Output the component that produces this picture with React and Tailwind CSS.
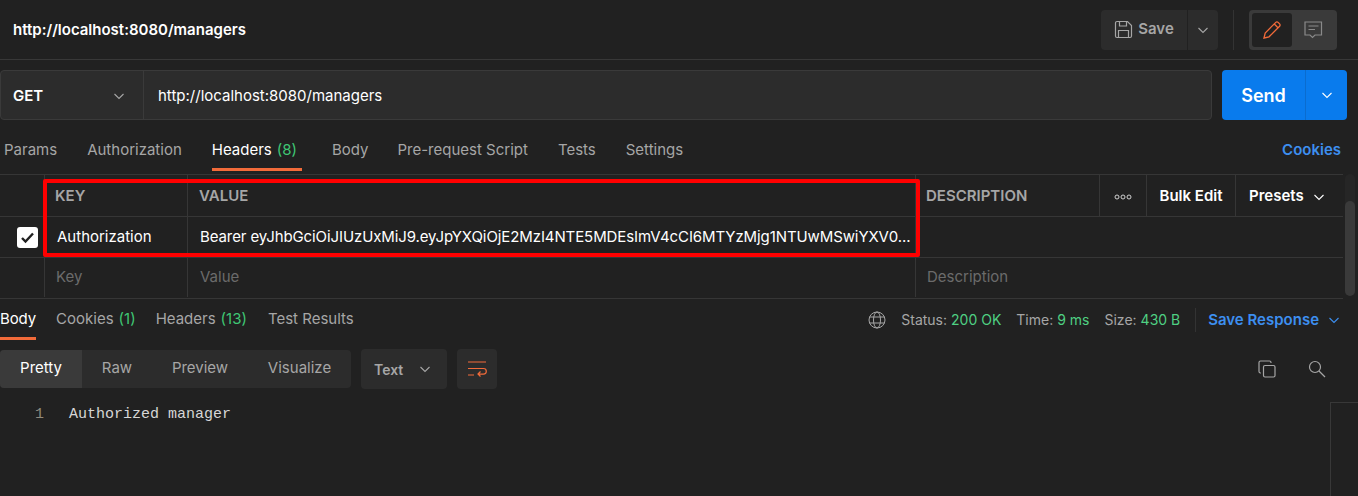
import React from "react";

const Chevron = ({ className = "", size = 14 }) => (
  <svg width={size} height={size} viewBox="0 0 14 14" fill="none" stroke="currentColor" strokeWidth="1.1" className={className}>
    <path d="M2.5 5l4.5 4.5L11.5 5" />
  </svg>
);

const Tab = ({ children, active, count, className = "" }) => (
  <div className={`relative flex h-full items-center whitespace-nowrap ${active ? "text-white" : "text-[#a6a6a6]"} ${className}`}>
    <span>{children}</span>
    {count && <span className="ml-[5px] text-[#3fc774]">{count}</span>}
    {active && <span className="absolute bottom-0 left-0 right-0 h-[3px] bg-[#f26b3a]" />}
  </div>
);

const Th = ({ children, className = "" }) => (
  <div className={`flex h-full items-center border-r border-[#363636] pt-[2px] font-semibold text-[#a6a6a6] ${className}`}>{children}</div>
);

export default function App() {
  return (
    <div className="relative h-[496px] w-[1358px] overflow-hidden bg-[#212121] text-[15px] text-white" style={{ fontFamily: "Inter, sans-serif" }}>
      {/* Title bar */}
      <header className="flex h-[60px] items-center border-b border-[#383838] pr-[21px] pl-[13px]">
        <h1 className="flex-1 pt-[2px] text-[15px] font-semibold">http://localhost:8080/managers</h1>
        <div className="flex h-[40px] items-center gap-px">
          <button className="flex h-full w-[86px] items-center justify-center gap-[5px] rounded-l-[4px] bg-[#2c2c2c] font-semibold text-[#a6a6a6]">
            <svg width="19" height="19" viewBox="0 0 19 19" fill="none" stroke="currentColor" strokeWidth="1.2">
              <path d="M1.5 3a1.5 1.5 0 0 1 1.5-1.5h10.5l4 4V16a1.5 1.5 0 0 1-1.5 1.5H3A1.5 1.5 0 0 1 1.5 16z" />
              <path d="M5.5 1.5v4.5h7V1.5M4.5 17.5v-7h10v7" />
            </svg>
            Save
          </button>
          <button className="flex h-full w-[30px] items-center justify-center rounded-r-[4px] bg-[#2c2c2c] text-[#a6a6a6]">
            <Chevron />
          </button>
        </div>
        <div className="mx-[15px] h-[40px] w-px bg-[#333333]" />
        <div className="flex h-[40px] w-[88px] items-center rounded-[4px] bg-[#3a3a3a] p-[3px]">
          <div className="flex h-[34px] w-[40px] items-center justify-center rounded-[3px] bg-[#212121] text-[#f26b3a]">
            <svg width="20" height="20" viewBox="0 0 20 20" fill="none" stroke="currentColor" strokeWidth="1.3">
              <path d="M2 18l1.200-5L13.800 2.400a1.600 1.600 0 0 1 2.300 0l1.500 1.500a1.600 1.600 0 0 1 0 2.300L7 16.800z" />
              <path d="M12.300 4l3.700 3.700" />
            </svg>
          </div>
          <div className="flex h-[34px] flex-1 items-center justify-center text-[#8a8a8a]">
            <svg width="20" height="20" viewBox="0 0 20 20" fill="none" stroke="currentColor" strokeWidth="1.2">
              <path d="M2 2h16.500v13h-6.500l-2.500 2.500L7 15H2z" />
              <path d="M5.500 6h10M5.500 9.500h6.500" />
            </svg>
          </div>
        </div>
      </header>

      {/* URL bar */}
      <section className="mt-[10px] flex h-[50px] items-stretch pr-[11px]">
        <div className="flex flex-1 rounded-[4px] border border-[#3a3a3a] bg-[#2c2c2c]">
          <div className="flex w-[143px] items-center justify-between border-r border-[#3a3a3a] pt-[2px] pr-[17px] pl-[12px] font-semibold">
            GET
            <Chevron className="text-[#a6a6a6]" />
          </div>
          <div className="flex flex-1 items-center pt-[2px] pl-[14px]">http://localhost:8080/managers</div>
        </div>
        <div className="ml-[10px] flex w-[125px] rounded-[4px] bg-[#097bed]">
          <div className="flex w-[84px] items-center justify-center border-r border-[#0a6ccf] text-[18px] font-semibold">Send</div>
          <div className="flex flex-1 items-center justify-center">
            <Chevron />
          </div>
        </div>
      </section>

      {/* Request tabs */}
      <nav className="mt-[10px] flex h-[41px] items-center pr-[17px] pl-[4px]">
        <Tab className="mr-[30px]">Params</Tab>
        <Tab className="mr-[30px]">Authorization</Tab>
        <Tab active count="(8)" className="mr-[30px] pr-[5px]">Headers</Tab>
        <Tab className="mr-[29px]">Body</Tab>
        <Tab className="mr-[30px]">Pre-request Script</Tab>
        <Tab className="mr-[30px]">Tests</Tab>
        <Tab>Settings</Tab>
        <span className="ml-auto font-semibold text-[#3d8ff0]">Cookies</span>
      </nav>

      {/* Headers table */}
      <section className="relative mt-[3px] mr-[15px]">
        <div className="flex h-[43px] items-center border-y border-[#363636]">
          <Th className="w-[45px]" />
          <Th className="w-[143px] pl-[10px]">KEY</Th>
          <Th className="w-[728px] pl-[11px]">VALUE</Th>
          <Th className="w-[184px] pl-[10px]">DESCRIPTION</Th>
          <Th className="w-[47px] justify-center">
            <svg width="18" height="6" viewBox="0 0 18 6" fill="none" stroke="#d0d0d0" strokeWidth="1">
              <circle cx="3" cy="3" r="2" />
              <circle cx="9" cy="3" r="2" />
              <circle cx="15" cy="3" r="2" />
            </svg>
          </Th>
          <Th className="w-[89px] justify-center text-white">Bulk Edit</Th>
          <div className="flex h-full flex-1 items-center pt-[2px] pl-[13px] font-semibold">
            Presets
            <Chevron className="ml-[8px]" />
          </div>
        </div>
        <div className="flex h-[41px] items-center border-b border-[#363636]">
          <div className="flex h-full w-[45px] items-center justify-end border-r border-[#363636] pr-[6px]">
            <span className="flex h-[21px] w-[21px] items-center justify-center rounded-[3px] bg-white text-[#212121]">
              <svg width="15" height="15" viewBox="0 0 15 15" fill="none" stroke="currentColor" strokeWidth="2.4">
                <path d="M2 8l3.500 3.500L13 3.500" />
              </svg>
            </span>
          </div>
          <div className="flex h-full w-[143px] items-center border-r border-[#363636] pl-[12px]">Authorization</div>
          <div className="flex h-full w-[728px] items-center border-r border-[#363636] pl-[12px] tracking-[-0.1px] whitespace-nowrap">
            Bearer eyJhbGciOiJIUzUxMiJ9.eyJpYXQiOjE2MzI4NTE5MDEsImV4cCI6MTYzMjg1NTUwMSwiYXV0...
          </div>
        </div>
        <div className="flex h-[41px] items-center border-b border-[#363636] pb-[1px] text-[#6b6b6b]">
          <div className="h-full w-[45px] border-r border-[#363636]" />
          <div className="flex h-full w-[143px] items-center border-r border-[#363636] pl-[11px]">Key</div>
          <div className="flex h-full w-[728px] items-center border-r border-[#363636] pl-[12px]">Value</div>
          <div className="pl-[11px]">Description</div>
        </div>
        <div className="absolute top-[5px] left-[43px] h-[78px] w-[877px] rounded-[2px] border-[4px] border-[#ff0000]" />
      </section>

      {/* Scrollbars */}
      <div className="absolute top-[174px] right-[3px] h-[122px] w-[10px] rounded-[5px] bg-[#262626]">
        <div className="absolute right-0 bottom-0 left-0 h-[95px] rounded-[5px] bg-[#3a3a3a]" />
      </div>

      {/* Response tabs */}
      <nav className="flex h-[41px] items-center pr-[17px]">
        <Tab active className="mr-[20px] tracking-[-0.1px]">Body</Tab>
        <Tab count="(1)" className="mr-[20px]">Cookies</Tab>
        <Tab count="(13)" className="mr-[21px]">Headers</Tab>
        <Tab>Test Results</Tab>
        <div className="ml-auto flex items-center text-[14px] text-[#a6a6a6]">
          <svg width="18" height="18" viewBox="0 0 18 18" fill="none" stroke="currentColor" strokeWidth="1" className="mr-[15px]">
            <circle cx="9" cy="9" r="8" />
            <ellipse cx="9" cy="9" rx="3.500" ry="8" />
            <path d="M1.500 6h15M1.500 12h15" />
          </svg>
          <span>Status:</span>
          <span className="ml-[4px] text-[#4fd083]">200 OK</span>
          <span className="ml-[15px]">Time:</span>
          <span className="ml-[4px] text-[#4fd083]">9 ms</span>
          <span className="ml-[15px]">Size:</span>
          <span className="ml-[4px] text-[#4fd083]">430 B</span>
          <span className="ml-[15px] h-[24px] w-px bg-[#333333]" />
          <span className="ml-[12px] pt-[2px] text-[15px] font-semibold text-[#3d8ff0]">Save Response</span>
          <Chevron className="ml-[8px] text-[#3d8ff0]" />
        </div>
      </nav>

      {/* Response toolbar */}
      <div className="mt-[9px] flex h-[40px] items-center pr-[32px]">
        <div className="flex h-[38px] w-[351px] items-center rounded-[4px] bg-[#2c2c2c] pb-[1px] text-[#a6a6a6]">
          <div className="mb-[-1px] flex h-[38px] w-[82px] items-center justify-center rounded-l-[4px] bg-[#3a3a3a] pb-[1px] text-white">Pretty</div>
          <div className="w-[70px] text-center">Raw</div>
          <div className="w-[96px] text-center">Preview</div>
          <div className="w-[103px] text-center">Visualize</div>
        </div>
        <div className="ml-[10px] flex h-[40px] w-[86px] items-center justify-between rounded-[4px] bg-[#2c2c2c] pr-[15px] pl-[13px] text-[14px] font-semibold text-[#a6a6a6]">
          Text
          <Chevron />
        </div>
        <div className="ml-[10px] flex h-[40px] w-[40px] items-center justify-center rounded-[4px] bg-[#2c2c2c] text-[#f26b3a]">
          <svg width="20" height="18" viewBox="0 0 20 18" fill="none" stroke="currentColor" strokeWidth="1.2">
            <path d="M1 2h18M1 8.500h15.500a2.800 2.800 0 0 1 0 5.600H11M1 15h6M13.500 11.500L11 14l2.500 2.500" />
          </svg>
        </div>
        <div className="ml-auto flex items-center gap-[32px] text-[#a6a6a6]">
          <svg width="18" height="18" viewBox="0 0 18 18" fill="none" stroke="currentColor" strokeWidth="1.2">
            <rect x="5.500" y="5.500" width="11.500" height="11.500" rx="1.500" />
            <path d="M3 13H2.500A1.500 1.500 0 0 1 1 11.500V2.500A1.500 1.500 0 0 1 2.500 1h9A1.500 1.500 0 0 1 13 2.500V3" />
          </svg>
          <svg width="18" height="18" viewBox="0 0 18 18" fill="none" stroke="currentColor" strokeWidth="1.2">
            <circle cx="7" cy="7" r="5.500" />
            <path d="M11 11l6 6" />
          </svg>
        </div>
      </div>

      {/* Response body */}
      <div className="relative mt-[15px] flex items-center" style={{ fontFamily: "'Liberation Mono', monospace" }}>
        <span className="w-[44px] text-right text-[15px] text-[#8f8a7d]">1</span>
        <span className="ml-[25px] text-[15px] text-[#d6d6d6]">Authorized manager</span>
      </div>
      <div className="absolute top-[402px] right-0 h-[94px] w-[28px] border-t border-l border-[#383838]" />
    </div>
  );
}
